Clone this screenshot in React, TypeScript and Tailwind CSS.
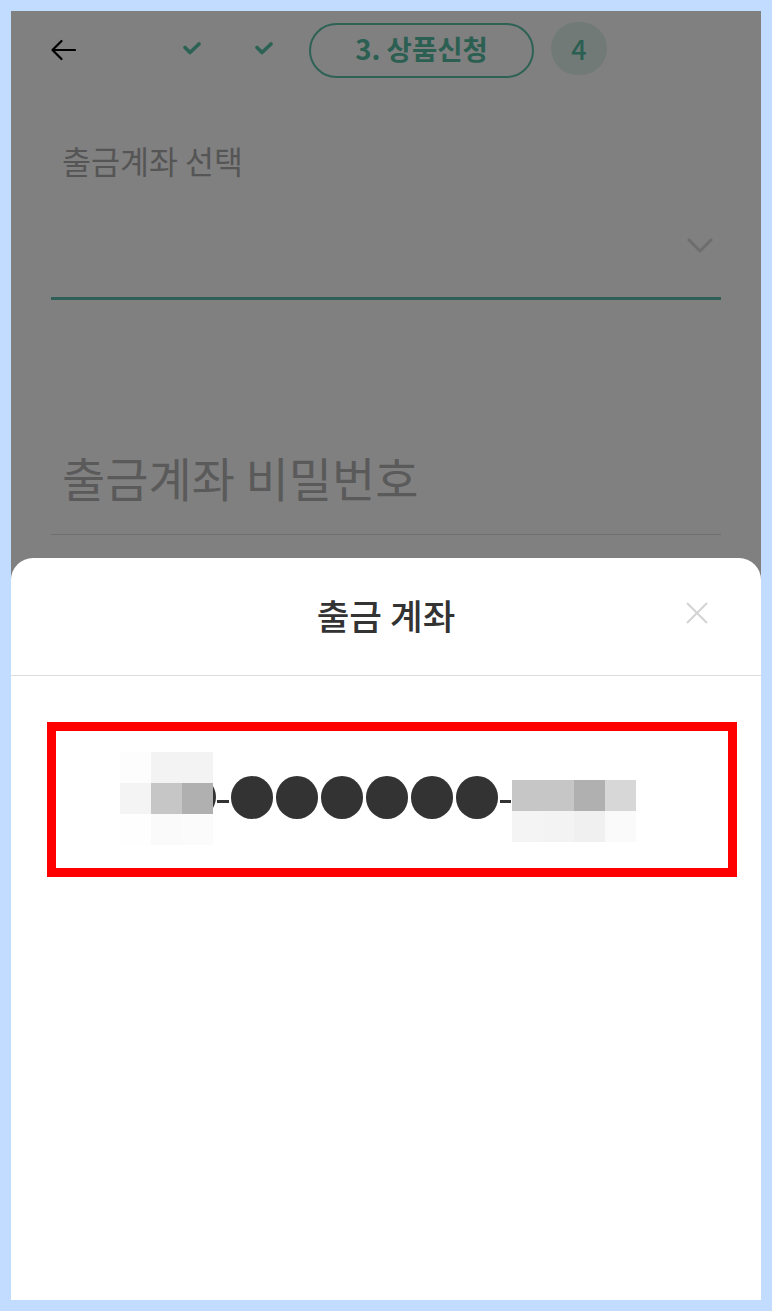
import React from "react";

const KR = { fontFamily: '"Noto Sans CJK KR", "Noto Sans", sans-serif' };

function Check() {
  return (
    <svg width="18" height="13" viewBox="0 0 18 13" fill="none">
      <polyline points="2,5.5 7,10.5 16,2" stroke="#2b6254" strokeWidth="3.6" strokeLinecap="round" strokeLinejoin="round" />
    </svg>
  );
}

const leftMosaic = [
  ["#fdfdfd", "#f3f3f3", "#f3f3f3"],
  ["#f4f4f4", "#c6c6c6", "#b0b0b0"],
  ["#fefefe", "#fafafa", "#fbfbfb"],
];
const rightMosaic = [
  ["#c6c6c6", "#c6c6c6", "#b0b0b0", "#d7d7d7"],
  ["#f4f4f4", "#f3f3f3", "#f0f0f0", "#fafafa"],
];

function Mosaic({ rows, h }: { rows: string[][]; h: number }) {
  return (
    <div className="flex flex-col">
      {rows.map((r, i) => (
        <div key={i} className="flex">
          {r.map((c, j) => (
            <div key={j} className="w-[31px]" style={{ backgroundColor: c, height: h }} />
          ))}
        </div>
      ))}
    </div>
  );
}

export default function App() {
  return (
    <div className="w-[772px] h-[1311px] bg-[#c2dcff] p-[11px]" style={KR}>
      <div className="relative w-[750px] h-[1289px] overflow-hidden bg-[#808080]">
        {/* Header */}
        <div className="flex items-center h-[56px] mt-[11px] pl-[39px]">
          <svg width="26" height="22" viewBox="0 0 26 22" fill="none">
            <path d="M25 11 H2.5 M11.5 2 L2.5 11 L11.5 20" stroke="#000" strokeWidth="2.2" strokeLinecap="round" strokeLinejoin="round" />
          </svg>
          <div className="ml-[107px] -mt-[3px]"><Check /></div>
          <div className="ml-[54px] -mt-[3px]"><Check /></div>
          <div className="ml-[36px] w-[225px] h-[55px] rounded-full border-2 border-[#2d6255] flex items-center justify-center">
            <span className="text-[27.5px] font-bold text-[#2b5f52] leading-none -mt-[2px]">3. 상품신청</span>
          </div>
          <div className="ml-[17px] w-[56px] h-[53px] rounded-full bg-[#717a77] flex items-center justify-center -mt-[3px]">
            <span className="text-[27px] font-medium text-[#2b5f52] leading-none">4</span>
          </div>
        </div>

        {/* Account select */}
        <div className="mx-[40px] mt-[67px]">
          <div className="text-[31.5px] leading-none text-[#555555] pl-[11px]">출금계좌 선택</div>
          <div className="flex justify-end items-start h-[120px] pr-[7px] pt-[60px]">
            <svg width="28" height="16" viewBox="0 0 28 16" fill="none">
              <polyline points="2,2 14,14 26,2" stroke="#6e6e6e" strokeWidth="3" strokeLinejoin="round" />
            </svg>
          </div>
          <div className="h-[3px] bg-[#2e5f56]" />
        </div>

        {/* Password */}
        <div className="mx-[40px] mt-[153px]">
          <div className="text-[47px] leading-none text-[#5a5a5a] pl-[11px]">출금계좌 비밀번호</div>
          <div className="h-[1px] bg-[#6e6e6e] mt-[34px]" />
        </div>

        {/* Bottom sheet */}
        <div className="absolute left-0 right-0 top-[547px] bottom-0 bg-white rounded-t-[22px]">
          <div className="relative h-[117px] flex items-center justify-center">
            <span className="text-[35.5px] font-medium text-[#333333] leading-none -mt-[4px]">출금 계좌</span>
            <svg className="absolute left-[675px] top-[44px]" width="22" height="22" viewBox="0 0 22 22" fill="none">
              <path d="M1 1 L21 21 M21 1 L1 21" stroke="#d3d3d3" strokeWidth="2" />
            </svg>
          </div>
          <div className="h-[1px] bg-[#dddddd]" />
          <div className="mt-[46px] ml-[36px] w-[690px] h-[155px] border-[9px] border-[#ff0000]">
            <div className="flex items-start pl-[64px] pt-[21px]">
              <Mosaic rows={leftMosaic} h={31} />
              <div className="w-[3px] h-[42px] overflow-hidden mt-[24px] relative">
                <div className="absolute right-0 top-0 w-[42px] h-[42px] rounded-full bg-[#333333]" />
              </div>
              <div className="w-[12px] h-[3px] bg-[#333333] ml-[1px] mt-[48px]" />
              <div className="flex gap-[3px] ml-[2px] mt-[24px]">
                {[0, 1, 2, 3, 4, 5].map((i) => (
                  <div key={i} className="w-[42px] h-[43px] rounded-full bg-[#333333]" />
                ))}
              </div>
              <div className="w-[11px] h-[3px] bg-[#333333] ml-[2px] mt-[48px]" />
              <div className="ml-[1px] mt-[28px]">
                <Mosaic rows={rightMosaic} h={31} />
              </div>
            </div>
          </div>
        </div>
      </div>
    </div>
  );
}
